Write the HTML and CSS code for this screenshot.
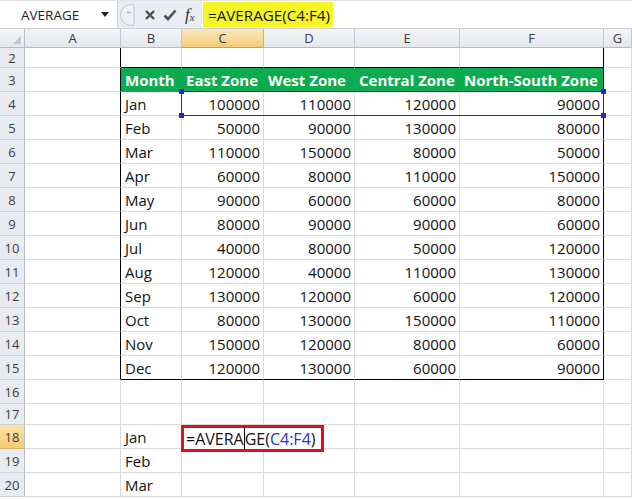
FILE: index.html
```html
<!DOCTYPE html>
<html>
<head>
<meta charset="utf-8">
<link rel="stylesheet" href="styles.css">
</head>
<body>
<div class="app">
  <div class="fbar">
    <div class="namebox">
      <span class="nb-text">AVERAGE</span>
      <svg class="nb-arrow" width="8" height="5" viewBox="0 0 8 5"><path d="M0 0h8L4 5z" fill="#222"/></svg>
    </div>
    <div class="tools">
      <svg class="grip" width="16" height="24" viewBox="0 0 16 24"><path d="M15 1.5H12A10.5 10.5 0 0 0 12 22.5H15Z" fill="#eef0f3" stroke="#c3c8cf"/><path d="M8 9.5h4" stroke="#a9b0b9" stroke-width="1.5"/></svg>
      <svg class="ico" width="12" height="12" viewBox="0 0 12 12"><path d="M2 2L10 10M10 2L2 10" stroke="#4a4f57" stroke-width="2.4"/></svg>
      <svg class="ico" width="14" height="12" viewBox="0 0 14 12"><path d="M1.5 6.5L5 10L12.5 1.5" stroke="#4a4f57" stroke-width="2.6" fill="none"/></svg>
      <span class="fx">f<sub>x</sub></span>
    </div>
    <div class="finput"><span class="fhl">=AVERAGE(C4:F4)</span></div>
  </div>

  <div class="sheet">
    <!-- column headers -->
    <div class="corner"><svg width="8" height="8" viewBox="0 0 8 8"><path d="M8 0V8H0Z" fill="#c1c7cf"/></svg></div>
    <div class="ch">A</div><div class="ch">B</div><div class="ch sel">C</div><div class="ch">D</div><div class="ch">E</div><div class="ch">F</div><div class="ch">G</div>

    <!-- row 2 -->
    <div class="rh">2</div><div class="c tr"></div><div class="c tb"></div><div class="c tb"></div><div class="c tb"></div><div class="c tb"></div><div class="c tb tr"></div><div class="c"></div>

    <!-- row 3 -->
    <div class="rh">3</div><div class="c tr"></div><div class="c hd">Month</div><div class="c hd">East Zone</div><div class="c hd">West Zone</div><div class="c hd">Central Zone</div><div class="c hd tr">North-South Zone</div><div class="c"></div>

    <div class="rh">4</div><div class="c tr"></div><div class="c">Jan</div><div class="c n">100000</div><div class="c n">110000</div><div class="c n">120000</div><div class="c n tr">90000</div><div class="c"></div>
    <div class="rh">5</div><div class="c tr"></div><div class="c">Feb</div><div class="c n">50000</div><div class="c n">90000</div><div class="c n">130000</div><div class="c n tr">80000</div><div class="c"></div>
    <div class="rh">6</div><div class="c tr"></div><div class="c">Mar</div><div class="c n">110000</div><div class="c n">150000</div><div class="c n">80000</div><div class="c n tr">50000</div><div class="c"></div>
    <div class="rh">7</div><div class="c tr"></div><div class="c">Apr</div><div class="c n">60000</div><div class="c n">80000</div><div class="c n">110000</div><div class="c n tr">150000</div><div class="c"></div>
    <div class="rh">8</div><div class="c tr"></div><div class="c">May</div><div class="c n">90000</div><div class="c n">60000</div><div class="c n">60000</div><div class="c n tr">80000</div><div class="c"></div>
    <div class="rh">9</div><div class="c tr"></div><div class="c">Jun</div><div class="c n">80000</div><div class="c n">90000</div><div class="c n">90000</div><div class="c n tr">60000</div><div class="c"></div>
    <div class="rh">10</div><div class="c tr"></div><div class="c">Jul</div><div class="c n">40000</div><div class="c n">80000</div><div class="c n">50000</div><div class="c n tr">120000</div><div class="c"></div>
    <div class="rh">11</div><div class="c tr"></div><div class="c">Aug</div><div class="c n">120000</div><div class="c n">40000</div><div class="c n">110000</div><div class="c n tr">130000</div><div class="c"></div>
    <div class="rh">12</div><div class="c tr"></div><div class="c">Sep</div><div class="c n">130000</div><div class="c n">120000</div><div class="c n">60000</div><div class="c n tr">120000</div><div class="c"></div>
    <div class="rh">13</div><div class="c tr"></div><div class="c">Oct</div><div class="c n">80000</div><div class="c n">130000</div><div class="c n">150000</div><div class="c n tr">110000</div><div class="c"></div>
    <div class="rh">14</div><div class="c tr"></div><div class="c">Nov</div><div class="c n">150000</div><div class="c n">120000</div><div class="c n">80000</div><div class="c n tr">60000</div><div class="c"></div>
    <div class="rh">15</div><div class="c tr"></div><div class="c tb">Dec</div><div class="c n tb">120000</div><div class="c n tb">130000</div><div class="c n tb">60000</div><div class="c n tb tr">90000</div><div class="c"></div>

    <div class="rh">16</div><div class="c"></div><div class="c"></div><div class="c"></div><div class="c"></div><div class="c"></div><div class="c"></div><div class="c"></div>
    <div class="rh">17</div><div class="c"></div><div class="c"></div><div class="c"></div><div class="c"></div><div class="c"></div><div class="c"></div><div class="c"></div>
    <div class="rh sel">18</div><div class="c"></div><div class="c">Jan</div><div class="c"></div><div class="c"></div><div class="c"></div><div class="c"></div><div class="c"></div>
    <div class="rh">19</div><div class="c"></div><div class="c">Feb</div><div class="c"></div><div class="c"></div><div class="c"></div><div class="c"></div><div class="c"></div>
    <div class="rh">20</div><div class="c"></div><div class="c">Mar</div><div class="c"></div><div class="c"></div><div class="c"></div><div class="c"></div><div class="c"></div>

    <!-- overlays (absolutely positioned in grid areas) -->
    <div class="selbox">
      <i class="hdl h-tl"></i><i class="hdl h-bl"></i><i class="hdl h-tr"></i><i class="hdl h-br"></i>
    </div>
    <div class="editbox">=AVERA<span class="caret"></span>GE(<span class="ref">C4:F4</span>)</div>
  </div>
</div>
</body>
</html>
```
FILE: styles.css
```css
* { box-sizing: border-box; }
html, body { margin: 0; padding: 0; background: #fff; }
body { width: 632px; height: 499px; overflow: hidden; font-family: "Open Sans", "Liberation Sans", sans-serif; }

.app { display: flex; flex-direction: column; }

/* formula bar */
.fbar {
  display: flex;
  height: 29px;
  border-bottom: 1px solid #c9ced6;
  background: #e7eaee;
  border-top: 1px solid #dfe3e8;
}
.namebox {
  width: 118px;
  background: #fff;
  display: flex;
  align-items: center;
  padding-left: 21px;
  border-right: 1px solid #cfd4db;
}
.nb-text { font-size: 13.5px; color: #222; }
.nb-arrow { margin-left: auto; margin-right: 8px; }
.tools {
  width: 84px;
  display: flex;
  align-items: center;
  background: #e9ecf0;
}
.grip { margin-left: 1px; margin-right: 9px; }
.ico { margin-right: 7px; }
.fx {
  font-family: "Liberation Serif", "DejaVu Serif", serif;
  font-style: italic;
  font-size: 17px;
  color: #333;
  margin-left: 1px;
}
.fx sub { font-size: 11px; vertical-align: -1px; }
.finput {
  flex: 1;
  background: #fff;
  display: flex;
  align-items: center;
  padding-left: 1px;
}
.fhl {
  background: #f6f626;
  height: 25px;
  display: flex;
  align-items: center;
  padding: 0 3px 0 5px;
  font-size: 15.2px;
  color: #111;
  border-radius: 0 0 3px 0;
}

/* sheet */
.sheet {
  position: relative;
  display: grid;
  grid-template-columns: 25px 96px 61px 82px 91px 105px 144px 28px;
  grid-template-rows: 19px 20px repeat(14, 24px) 21px repeat(3, 24px);
  font-size: 15px;
  color: #111;
}
.corner {
  background: linear-gradient(#f4f6f8, #e4e8ed);
  border-right: 1px solid #b7bec7;
  border-bottom: 1px solid #b2bbc6;
  display: flex;
  align-items: flex-end;
  justify-content: flex-end;
  padding: 0 3px 3px 0;
}
.ch {
  background: linear-gradient(#f3f5f7, #e3e7ec);
  border-right: 1px solid #c2c8d0;
  border-bottom: 1px solid #b2bbc6;
  font-size: 13px;
  color: #3c3c3c;
  display: flex;
  align-items: center;
  justify-content: center;
}
.ch.sel { background: linear-gradient(#fbe7bb, #f4cb78); border-right-color: #d7b26a; border-bottom-color: #c8a050; }
.rh {
  background: #e8ebef;
  border-right: 1px solid #b2bbc6;
  border-bottom: 1px solid #cdd2d8;
  font-size: 13px;
  color: #3c3c3c;
  display: flex;
  align-items: center;
  justify-content: center;
}
.rh.sel { background: linear-gradient(#fbe3a8, #f4cc6e); border-bottom-color: #d7b26a; }
.c {
  border-right: 1px solid #dadada;
  border-bottom: 1px solid #dadada;
  display: flex;
  align-items: center;
  padding: 0 3px 0 4px;
  white-space: nowrap;
}
.c.n { justify-content: flex-end; }
.c.hd {
  background: #0dab4f;
  color: #fff;
  font-weight: bold;
  border-right-color: #0dab4f;
  border-bottom-color: #0dab4f;
  padding-left: 4px;
}
.c.tb { border-bottom-color: #000; }
.c.tr { border-right-color: #000; }

/* selection of C4:F4 */
.selbox {
  position: absolute;
  grid-column: 4 / 8;
  grid-row: 4 / 5;
  top: -1px;
  left: -1px;
  right: 0;
  bottom: 0;
  border: 1px solid #2424c8;
}
.hdl { position: absolute; width: 5px; height: 5px; background: #2424d8; }
.h-tl { top: -3px; left: -3px; }
.h-bl { bottom: -3px; left: -3px; }
.h-tr { top: -3px; right: -3px; }
.h-br { bottom: -3px; right: -3px; }

/* in-cell edit with red annotation */
.editbox {
  position: absolute;
  grid-column: 4 / 6;
  grid-row: 18 / 19;
  top: 0;
  left: -1px;
  width: 143px;
  height: 27px;
  border: 3px solid #e3101b;
  background: #fff;
  display: flex;
  align-items: center;
  padding-left: 2px;
  font-size: 16px;
  color: #111;
  white-space: nowrap;
  z-index: 2;
}
.caret {
  display: inline-block;
  width: 1px;
  height: 23px;
  background: #000;
}
.ref { color: #2f30c8; }
```
